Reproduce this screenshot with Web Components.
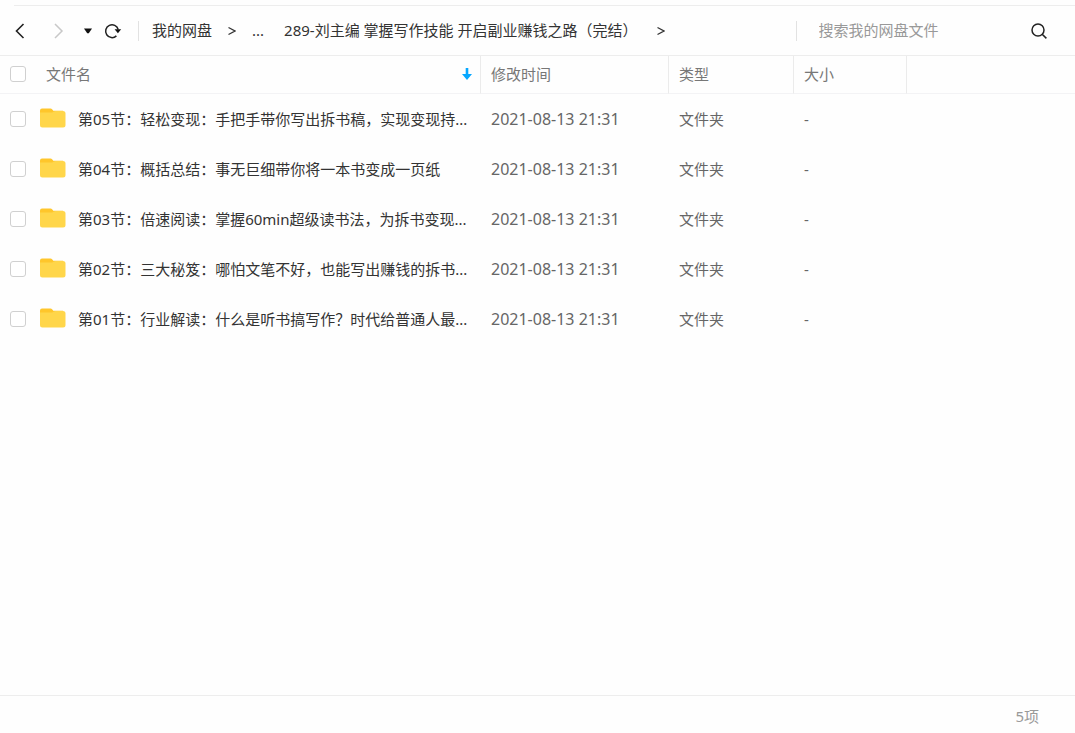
<!DOCTYPE html>
<html lang="zh-CN">
<head>
<meta charset="utf-8">
<title>我的网盘</title>
<style>
html, body { height: 100%; margin: 0; }
body { font: 15px/20px "Noto Sans", "Noto Sans CJK SC", sans-serif; color: #333; background: #fefefe; }
</style>
</head>
<body>
<disk-app>
  <nav-toolbar slot="toolbar">
    <crumb-item>我的网盘</crumb-item>
    <crumb-item collapsed>...</crumb-item>
    <crumb-item current>289-刘主编 掌握写作技能 开启副业赚钱之路（完结）</crumb-item>
    <search-box slot="search"></search-box>
  </nav-toolbar>
  <file-table></file-table>
  <status-bar slot="status">5项</status-bar>
</disk-app>

<script>
class BaseElement extends HTMLElement {
  constructor() {
    super();
    this.attachShadow({ mode: 'open' }).innerHTML = this.constructor.markup;
  }
}

class DiskApp extends BaseElement {
  static markup = `
    <style>
      :host { display: flex; flex-direction: column; min-height: 100vh; box-sizing: border-box; padding-top: 5px; }
      main { flex: 1; }
    </style>
    <slot name="toolbar"></slot>
    <main><slot></slot></main>
    <slot name="status"></slot>`;
}

class NavToolbar extends BaseElement {
  static markup = `
    <style>
      :host { display: block; }
      .rule { height: 1px; margin-left: 14px; background: #ededed; }
      .bar { display: flex; align-items: center; height: 49px; border-bottom: 1px solid #ededed; }
      .tools { display: flex; align-items: center; padding-left: 10px; }
      button { display: flex; align-items: center; justify-content: center; width: 20px; height: 24px; margin: 0; padding: 0; border: 0; background: none; color: #222; }
      .back { margin-right: 18px; }
      .forward { margin-right: 10px; color: #c8c8c8; }
      .reload { margin-left: 5px; }
      .divider { width: 1px; height: 20px; background: #e2e2e2; margin-left: 15px; }
      nav { flex: 1; display: flex; padding: 0 0 2px 13px; white-space: nowrap; min-width: 0; overflow: hidden; }
    </style>
    <div class="rule"></div>
    <div class="bar">
      <div class="tools">
        <button class="back" aria-label="后退"><svg width="16" height="16" viewBox="0 0 16 16" fill="none" stroke="currentColor" stroke-width="1.6"><path d="M11.5 1 4.5 8l7 7"/></svg></button>
        <button class="forward" aria-label="前进"><svg width="16" height="16" viewBox="0 0 16 16" fill="none" stroke="currentColor" stroke-width="1.5"><path d="M5 1l7 7-7 7"/></svg></button>
        <button class="history" aria-label="历史记录"><svg width="8" height="6" viewBox="0 0 8 6"><path d="M0 .5h8L4.800 5.200H3.200z" fill="#111"/></svg></button>
        <button class="reload" aria-label="刷新"><svg width="18" height="16" viewBox="0 0 18 16" fill="none"><path d="M12.400 12.900A6.400 6.400 0 1 1 14.200 6.500" stroke="#222" stroke-width="1.5"/><path d="M10.600 6.200h6.600l-3.300 4z" fill="#111"/></svg></button>
        <span class="divider"></span>
      </div>
      <nav aria-label="路径"><slot></slot></nav>
      <slot name="search"></slot>
    </div>`;
}

class CrumbItem extends BaseElement {
  static markup = `
    <style>
      :host { display: flex; align-items: center; }
      a { color: #333; text-decoration: none; }
      svg { margin: 2px 16px 0; }
      :host([collapsed]) { margin-right: 20px; }
      :host([collapsed]) svg { display: none; }
      :host([current]) svg { margin-left: 20px; }
    </style>
    <a href="#"><slot></slot></a>
    <svg width="8" height="10" viewBox="0 0 8 10" fill="none" stroke="#333" stroke-width="1.3"><path d="M.5 1.500 7 5 .5 8.500"/></svg>`;
}

class SearchBox extends BaseElement {
  static markup = `
    <style>
      :host { display: block; flex: 0 0 26%; min-width: 0; }
      form { display: flex; align-items: center; box-sizing: border-box; height: 20px; padding-left: 22px; padding-right: 27px; border-left: 1px solid #e2e2e2; }
      input { flex: 1; width: 0; min-width: 0; height: 20px; padding: 0 0 2px; border: 0; outline: 0; background: none; font: inherit; color: #333; }
      input::placeholder { color: #999; opacity: 1; }
      button { display: flex; padding: 0; border: 0; background: none; }
    </style>
    <form role="search">
      <input type="text" placeholder="搜索我的网盘文件" aria-label="搜索我的网盘文件">
      <button type="button" aria-label="搜索"><svg width="18" height="18" viewBox="0 0 18 18" fill="none" stroke="#222" stroke-width="1.5"><circle cx="8" cy="8" r="6"/><path d="M12.200 12.200l4.200 4.200"/></svg></button>
    </form>`;
}

class FolderIcon extends BaseElement {
  static markup = `
    <style>:host { display: block; flex: none; width: 26px; height: 20px; }</style>
    <svg width="26" height="20" viewBox="0 0 26 20" style="display:block">
      <path d="M0 2.500Q0 .5 2 .5h8.500q1 0 1.600.8l1.200 1.500H23v6H0z" fill="#ffc62b"/>
      <path d="M0 4.500h11.800q1 0 1.800-.7l.6-.4q.5-.4 1.300-.4H23q2.500 0 2.500 2.500v11.500q0 2.500-2.500 2.500H2.500Q0 19.500 0 17z" fill="#ffd64a"/>
    </svg>`;
}

class FileTable extends BaseElement {
  static markup = `
    <style>
      :host { display: block; }
      table { width: 100%; border-collapse: separate; border-spacing: 0; table-layout: fixed; }
      .date { width: 188px; } .type { width: 125px; } .size { width: 113px; } .rest { width: 168px; }
      th, td { box-sizing: border-box; padding: 0 10px; text-align: left; font-weight: 400; white-space: nowrap; }
      th { height: 38px; padding-bottom: 2px; color: #777; border-right: 1px solid #ebebeb; border-bottom: 1px solid #f3f3f5; }
      th:last-child { border-right: 0; }
      td { height: 50px; color: #666; }
      td.time { font-size: 16px; }
      .cell { display: flex; align-items: center; }
      .cell .title { flex: 1; margin-left: 20px; }
      input { appearance: none; flex: none; width: 16px; height: 16px; margin: 0; border: 1px solid #d0d0d0; border-radius: 3px; background: #fff; }
      input:checked { background: #06a7ff; border-color: #06a7ff; }
      folder-icon { margin: 0 12px 2px 14px; }
      a { color: #333; text-decoration: none; }
      .head svg { margin-right: -3px; }
    </style>
    <table>
      <colgroup><col><col class="date"><col class="type"><col class="size"><col class="rest"></colgroup>
      <thead><tr>
        <th><div class="cell head"><input type="checkbox" aria-label="全选"><span class="title">文件名</span>
          <svg width="12" height="12" viewBox="0 0 12 12"><path d="M4.700 0h2.600v6H11L6 12 1 6h3.700z" fill="#06a7ff"/></svg></div></th>
        <th>修改时间</th><th>类型</th><th>大小</th><th></th>
      </tr></thead>
      <tbody></tbody>
    </table>`;
  connectedCallback() {
    const names = [
      '第05节：轻松变现：手把手带你写出拆书稿，实现变现持...',
      '第04节：概括总结：事无巨细带你将一本书变成一页纸',
      '第03节：倍速阅读：掌握60min超级读书法，为拆书变现...',
      '第02节：三大秘笈：哪怕文笔不好，也能写出赚钱的拆书...',
      '第01节：行业解读：什么是听书搞写作？时代给普通人最...'
    ];
    this.shadowRoot.querySelector('tbody').innerHTML = names.map((name, i) => `
      <tr><td><div class="cell"><input type="checkbox" aria-labelledby="f${i}"><folder-icon></folder-icon><a href="#" id="f${i}">${name}</a></div></td>
      <td class="time">2021-08-13 21:31</td><td>文件夹</td><td>-</td><td></td></tr>`).join('');
  }
}

class StatusBar extends BaseElement {
  static markup = `
    <style>
      :host { display: flex; align-items: center; justify-content: flex-end; height: 38px; padding: 2px 36px 0 0; box-sizing: border-box; border-top: 1px solid #ededed; color: #999; }
    </style>
    <slot></slot>`;
}

customElements.define('folder-icon', FolderIcon);
customElements.define('crumb-item', CrumbItem);
customElements.define('search-box', SearchBox);
customElements.define('nav-toolbar', NavToolbar);
customElements.define('file-table', FileTable);
customElements.define('status-bar', StatusBar);
customElements.define('disk-app', DiskApp);
</script>
</body>
</html>
